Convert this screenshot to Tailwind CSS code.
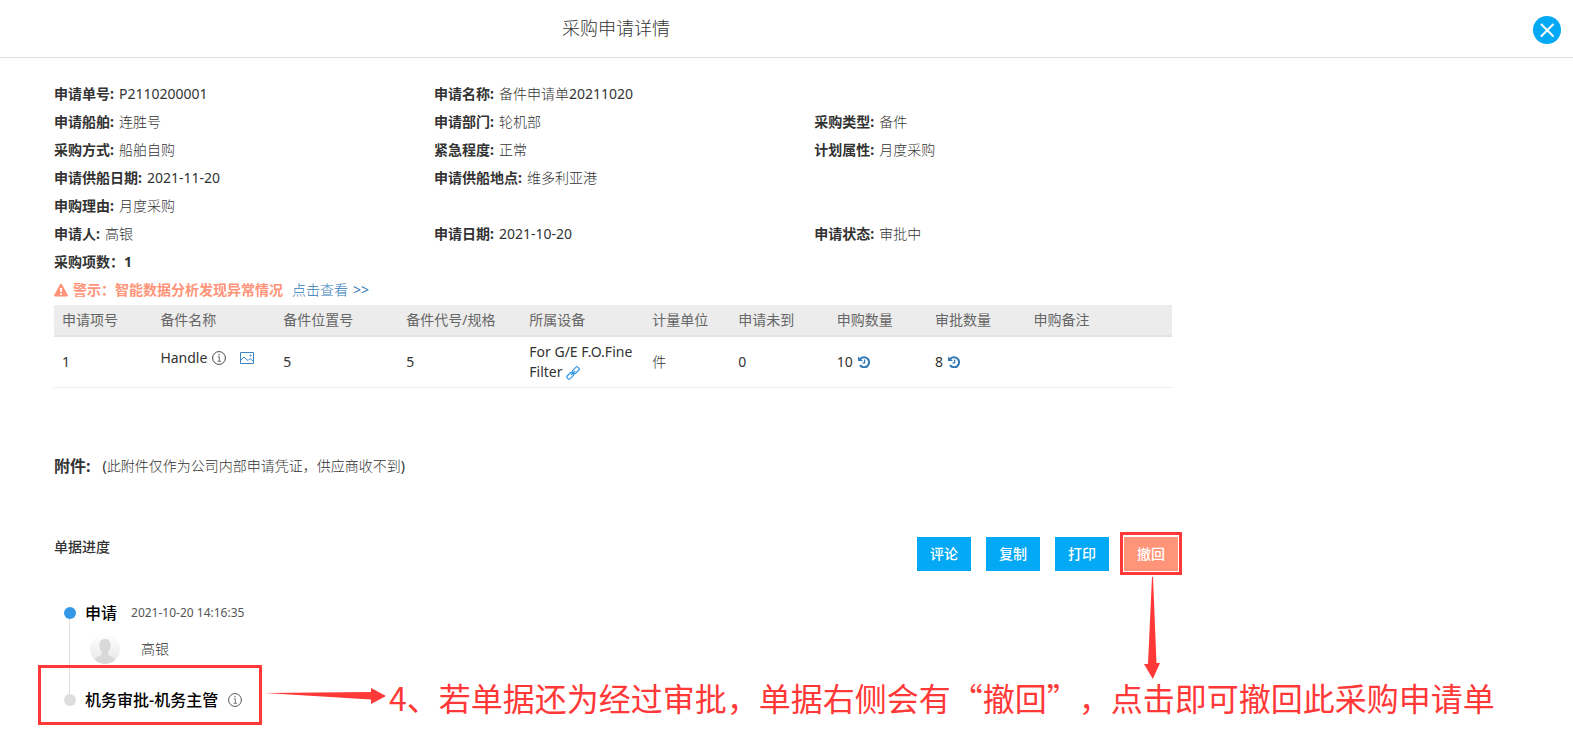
<!DOCTYPE html>
<html lang="zh-CN">
<head>
<meta charset="utf-8">
<meta name="viewport" content="width=device-width, initial-scale=1">
<title>采购申请详情</title>
<script src="https://cdn.jsdelivr.net/npm/@tailwindcss/browser@4"></script>
</head>
<body class="relative min-h-screen overflow-x-hidden bg-white font-['Noto_Sans','Noto_Sans_CJK_SC',sans-serif] text-sm text-[#333]">
<header class="flex h-[58px] items-center justify-between border-b border-[#ddd] pr-3">
  <h1 class="w-full max-w-[1232px] pb-0.5 text-center text-lg font-light text-[#333]">采购申请详情</h1>
  <button type="button" aria-label="关闭" class="mt-0.5 size-7 shrink-0 rounded-full bg-[#03a9f4]">
    <svg viewBox="0 0 28 28" class="size-7" fill="none" stroke="#fff" stroke-width="2" stroke-linecap="round"><path d="M8.500 8.500l11.500 11.500M20 8.500L8.500 20"/></svg>
  </button>
</header>

<main class="w-full max-w-[1178px] pt-[22px] pl-[54px]">
  <div class="mr-[6px]">
  <dl class="grid grid-cols-[34%_34%_1fr] leading-7">
    <div class="flex gap-[5px]"><dt class="font-bold">申请单号:</dt><dd>P2110200001</dd></div>
    <div class="col-span-2 flex gap-[5px]"><dt class="font-bold">申请名称:</dt><dd><span class="font-light">备件申请单</span>20211020</dd></div>
    <div class="flex gap-[5px]"><dt class="font-bold">申请船舶:</dt><dd class="font-light">连胜号</dd></div>
    <div class="flex gap-[5px]"><dt class="font-bold">申请部门:</dt><dd class="font-light">轮机部</dd></div>
    <div class="flex gap-[5px]"><dt class="font-bold">采购类型:</dt><dd class="font-light">备件</dd></div>
    <div class="flex gap-[5px]"><dt class="font-bold">采购方式:</dt><dd class="font-light">船舶自购</dd></div>
    <div class="flex gap-[5px]"><dt class="font-bold">紧急程度:</dt><dd class="font-light">正常</dd></div>
    <div class="flex gap-[5px]"><dt class="font-bold">计划属性:</dt><dd class="font-light">月度采购</dd></div>
    <div class="flex gap-[5px]"><dt class="font-bold">申请供船日期:</dt><dd>2021-11-20</dd></div>
    <div class="col-span-2 flex gap-[5px]"><dt class="font-bold">申请供船地点:</dt><dd class="font-light">维多利亚港</dd></div>
    <div class="col-span-3 flex gap-[5px]"><dt class="font-bold">申购理由:</dt><dd class="font-light">月度采购</dd></div>
    <div class="flex gap-[5px]"><dt class="font-bold">申请人:</dt><dd class="font-light">高银</dd></div>
    <div class="flex gap-[5px]"><dt class="font-bold">申请日期:</dt><dd>2021-10-20</dd></div>
    <div class="flex gap-[5px]"><dt class="font-bold">申请状态:</dt><dd class="font-light">审批中</dd></div>
    <div class="col-span-3 flex font-bold"><dt>采购项数：</dt><dd>1</dd></div>
  </dl>
  <p class="flex items-center leading-7">
    <svg viewBox="0 0 14 14" class="mr-[5px] size-3.5" fill="#ff9478"><path fill-rule="evenodd" d="M6.200 1c.4-.7 1.200-.7 1.600 0l6 11c.4.700 0 1.400-.8 1.400H1c-.8 0-1.200-.7-.8-1.400zM6 5l.2 4h1.600L8 5zM6.100 10.200V12h1.800v-1.800z"/></svg>
    <strong class="mr-[9px] font-bold text-[#ff9478]">警示：智能数据分析发现异常情况</strong>
    <a href="#" class="flex gap-[5px] text-[#337ab7]"><span class="font-light">点击查看</span><span>&gt;&gt;</span></a>
  </p>

  <table class="mt-px w-full table-fixed border-collapse text-left leading-5">
    <colgroup><col class="w-[8.8%]"><col class="w-[11%]"><col class="w-[11%]"><col class="w-[11%]"><col class="w-[11%]"><col class="w-[7.7%]"><col class="w-[8.8%]"><col class="w-[8.8%]"><col class="w-[8.8%]"><col></colgroup>
    <thead>
      <tr class="h-[31px] border-b-2 border-[#dfe4e8] bg-[#ececec] text-[#666]">
        <th class="px-2 font-normal">申请项号</th><th class="px-2 font-normal">备件名称</th><th class="px-2 font-normal">备件位置号</th><th class="px-2 font-normal">备件代号/规格</th><th class="px-2 font-normal">所属设备</th><th class="px-2 font-normal">计量单位</th><th class="px-2 font-normal">申请未到</th><th class="px-2 font-normal">申购数量</th><th class="px-2 font-normal">审批数量</th><th class="px-2 font-normal">申购备注</th>
      </tr>
    </thead>
    <tbody>
      <tr class="h-[51px] border-b border-[#eee]">
        <td class="px-2">1</td>
        <td class="px-2 pb-2">
          <div class="flex items-center">Handle
            <svg viewBox="0 0 14 14" class="ml-[5px] size-3.5" fill="none" stroke="#444"><circle cx="7" cy="7" r="6.400"/><path d="M5.800 5.800H7.300V10M5.600 10.300H9" stroke-width=".8"/><circle cx="7" cy="3.700" r=".5" fill="#444" stroke-width=".3"/></svg>
            <svg viewBox="0 0 14 12" class="ml-3.5 h-3 w-3.5" fill="none" stroke="#3d86c6"><path d="M.5.500h13v11H.5z"/><path d="M1 8l3-3 4 3.500L10 6.500 13 9"/><circle cx="10.500" cy="3.500" r=".6"/></svg>
          </div>
        </td>
        <td class="px-2">5</td>
        <td class="px-2">5</td>
        <td class="px-2">For G/E F.O.Fine Filter
          <a href="#" aria-label="关联设备" class="inline-block align-middle"><svg viewBox="0 0 14 14" class="size-3.5" fill="none" stroke="#3598e6" stroke-width="1.200"><rect x="-3.500" y="-2" width="7" height="4" rx="1.200" transform="translate(4.200 9.800) rotate(-45)"/><rect x="-3.500" y="-2" width="7" height="4" rx="1.200" transform="translate(9.800 4.200) rotate(-45)"/><path d="M5 9l4-4"/></svg></a>
        </td>
        <td class="px-2 font-light">件</td>
        <td class="px-2">0</td>
        <td class="px-2"><div class="flex items-center gap-[5px]">10
          <button type="button" aria-label="申购数量记录"><svg viewBox="0 0 12 12" class="size-3" fill="none" stroke="#337ab7"><path stroke-width="2" d="M2.300 3A5 5 0 1 1 2 9.200"/><path fill="#337ab7" stroke="none" d="M0 .5l5 4.500H0z"/><path stroke-width="1.200" d="M6.600 3.500v3.300H4.500"/></svg></button></div></td>
        <td class="px-2"><div class="flex items-center gap-[5px]">8
          <button type="button" aria-label="审批数量记录"><svg viewBox="0 0 12 12" class="size-3" fill="none" stroke="#337ab7"><path stroke-width="2" d="M2.300 3A5 5 0 1 1 2 9.200"/><path fill="#337ab7" stroke="none" d="M0 .5l5 4.500H0z"/><path stroke-width="1.200" d="M6.600 3.500v3.300H4.500"/></svg></button></div></td>
        <td class="px-2"></td>
      </tr>
    </tbody>
  </table>

  <section class="mt-16 flex items-center gap-3 leading-7">
    <h2 class="text-base font-bold">附件:</h2>
    <p>(<span class="font-light">此附件仅作为公司内部申请凭证，供应商收不到</span>)</p>
  </section>
  </div>

  <section class="mt-[57px] flex items-start justify-between">
    <h2 class="leading-5 font-medium">单据进度</h2>
    <div class="flex gap-[15px] font-medium text-white">
      <button type="button" class="h-[34px] w-[54px] bg-[#03a9f4]">评论</button>
      <button type="button" class="h-[34px] w-[54px] bg-[#03a9f4]">复制</button>
      <button type="button" class="h-[34px] w-[54px] bg-[#03a9f4]">打印</button>
      <div class="relative">
        <button type="button" class="h-[34px] w-[54px] bg-[#ff9478]">撤回</button>
        <div class="pointer-events-none absolute -inset-x-1 -top-[5px] -bottom-1 border-3 border-[#ff3838]"></div>
        <svg viewBox="0 0 16 102" class="pointer-events-none absolute top-10 left-5 h-[102px] w-4" fill="#ff3838"><path d="M8 0h1l3.500 86H16L8.800 102 0 87h4z"/></svg>
      </div>
    </div>
  </section>

  <ol class="mt-[30px] pl-2.5 text-black">
    <li class="relative h-[87px]">
      <span class="absolute top-[18px] left-[5px] h-[75px] w-px bg-[#ddd]"></span>
      <div class="flex h-6 items-center">
        <span class="mr-[9px] size-3 rounded-full bg-[#3598e6]"></span>
        <h3 class="mr-3.5 text-base font-medium">申请</h3>
        <time class="text-xs text-[#555]">2021-10-20 14:16:35</time>
      </div>
      <div class="mt-[9px] flex items-center gap-[21px] pl-[26px]">
        <svg viewBox="0 0 30 30" class="size-[30px]"><defs><clipPath id="avatar"><circle cx="15" cy="15" r="15"/></clipPath><linearGradient id="shade" x1="0" x2="0" y1="0" y2="1"><stop stop-color="#fff"/><stop offset="1" stop-color="#e6e6e6"/></linearGradient></defs><g clip-path="url(#avatar)"><path fill="url(#shade)" d="M0 0h30v30H0z"/><path fill="#d8d8d8" d="M15 5c4 0 6 3 5.500 7.500-.3 3-1.300 4-2.300 5.500-.8 2 .3 3.200 2.800 4.200 3 1.200 4.500 3 5 7.800H4c.5-4.800 2-6.600 5-7.800 2.500-1 3.600-2.200 2.800-4.200-1-1.500-2-2.500-2.300-5.500C9 8 11 5 15 5z"/></g></svg>
        <span class="font-light text-[#333]">高银</span>
      </div>
    </li>
    <li class="relative flex h-6 items-center">
      <span class="mr-[9px] size-3 rounded-full bg-[#ddd]"></span>
      <h3 class="mr-2.5 text-base font-medium">机务审批-机务主管</h3>
      <svg viewBox="0 0 14 14" class="size-3.5" fill="none" stroke="#555"><circle cx="7" cy="7" r="6.400"/><path d="M5.800 5.800H7.300V10M5.600 10.300H9" stroke-width=".8"/><circle cx="7" cy="3.700" r=".5" fill="#555" stroke-width=".3"/></svg>
      <div class="pointer-events-none absolute -top-[23px] -left-[26px] h-[60px] w-56 border-3 border-[#ff3838]"></div>
      <svg viewBox="0 0 121 16" class="pointer-events-none absolute top-0 left-[201px] h-4 w-[121px]" fill="#ff3838"><path d="M0 5l106-1V0l15 8-15 8v-4.500z"/></svg>
      <p class="absolute -top-[15px] left-[325px] font-['Noto_Sans_CJK_SC',sans-serif] text-[32px] leading-12 whitespace-nowrap text-[#ff3838] [text-spacing-trim:space-all]">4、若单据还为经过审批，单据右侧会有“撤回”，点击即可撤回此采购申请单</p>
    </li>
  </ol>
</main>
</body>
</html>
